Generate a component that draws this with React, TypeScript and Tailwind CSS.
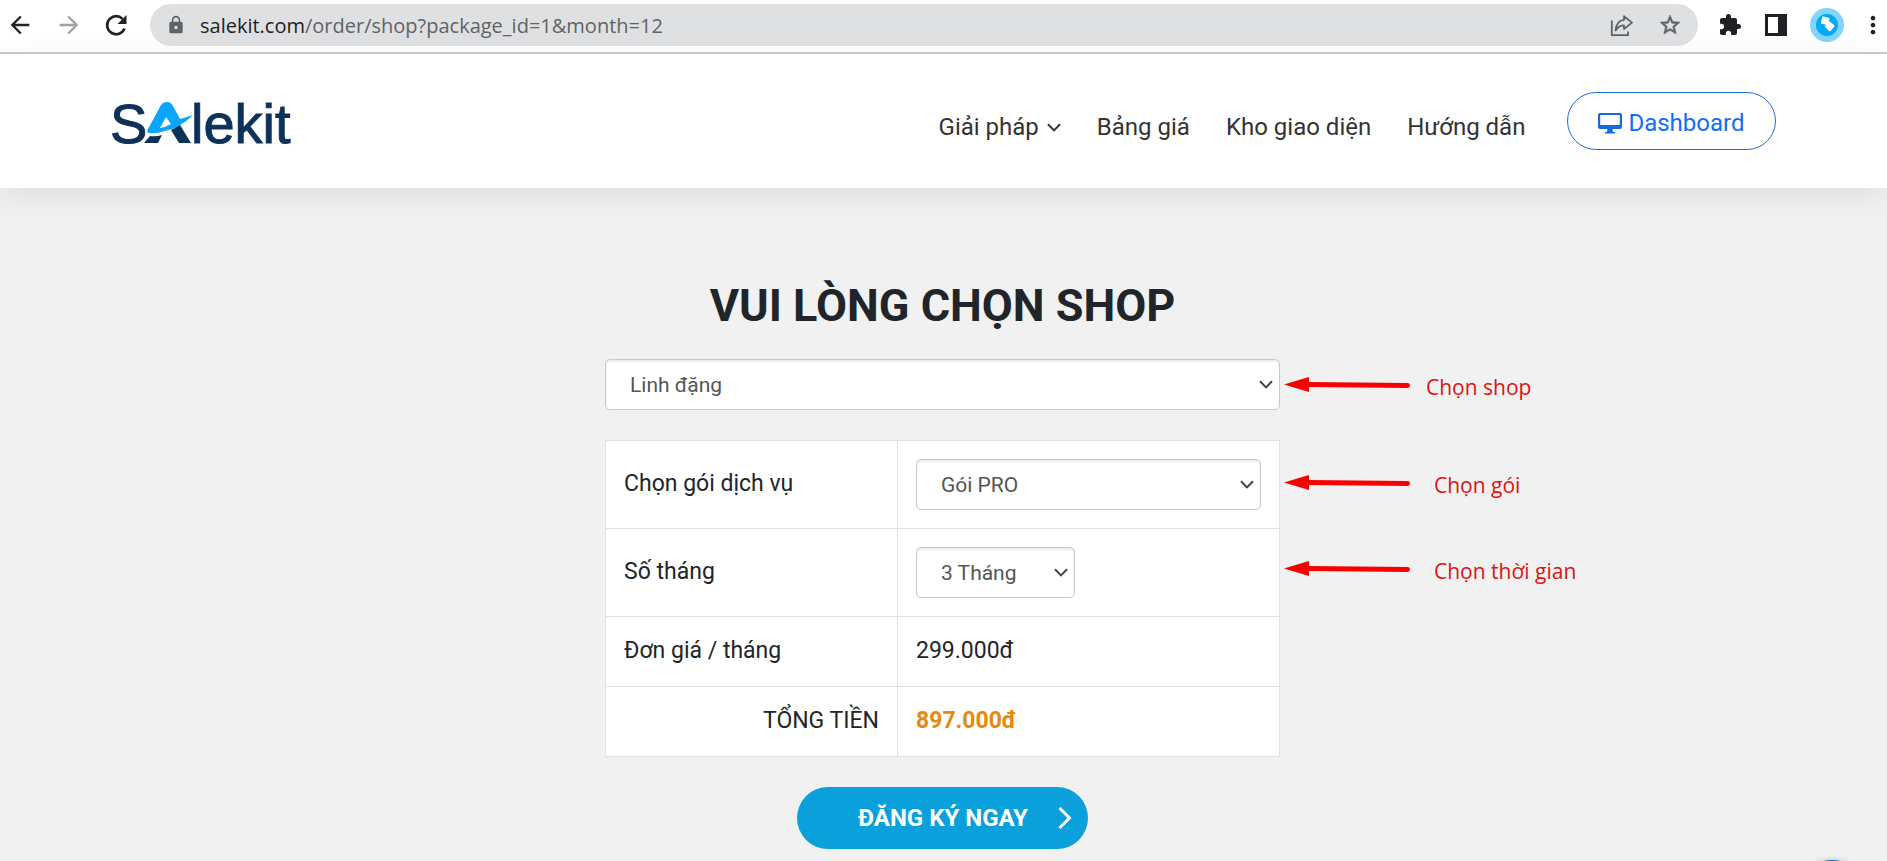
import React from 'react';
import { MdArrowBack, MdArrowForward, MdExtension, MdLock, MdMoreVert, MdStarOutline } from 'react-icons/md';

const navLinks = ['Bảng giá', 'Kho giao diện', 'Hướng dẫn'];

const Chevron: React.FC<{ className?: string }> = ({ className }) => (
  <svg viewBox="0 0 14 9" fill="none" stroke="currentColor" className={className} aria-hidden="true">
    <path d="M1 1.2 7 7.4 13 1.2" strokeWidth="2" />
  </svg>
);

const ShareIcon: React.FC = () => (
  <svg viewBox="0 0 24 24" fill="none" stroke="currentColor" strokeWidth="1.8" className="h-6 w-6">
    <path d="M1.800 7.500V22.200H18V18.500" />
    <path d="M14 3.200 22 9.600 14 16V12.300C10 12.300 8 13.600 5.600 17.400 6.200 11.400 8.800 7.400 14 6.900Z" strokeLinejoin="round" />
  </svg>
);

const ReloadIcon: React.FC = () => (
  <svg viewBox="0 0 24 24" fill="none" stroke="currentColor" className="h-6 w-6">
    <path d="M20.500 15.500A9 9 0 1 1 18.500 5.800" strokeWidth="2.600" />
    <path d="M22.500 2V11H13.500Z" fill="currentColor" stroke="none" />
  </svg>
);

const BrowserBar: React.FC = () => (
  <div className="flex h-[54px] items-start border-b-2 border-[#c9c9c9] bg-white pt-1">
    <div className="flex h-[42px] items-center gap-[21px] pl-1.5 pr-[22px]">
      <button aria-label="Back" className="text-[#202124]"><MdArrowBack className="h-7 w-7" /></button>
      <button aria-label="Forward" className="text-[#a0a1a3]"><MdArrowForward className="h-7 w-7" /></button>
      <button aria-label="Reload" className="text-[#202124]"><ReloadIcon /></button>
    </div>
    <div className="flex h-[42px] flex-1 items-center rounded-full bg-[#dfe0e2] pl-4 pr-4 text-[#5f6368]">
      <MdLock className="h-5 w-5" />
      <div className="ml-3.5 flex-1 pt-0.5 font-['Open_Sans',sans-serif] text-xl">
        <span className="text-[#202124]">salekit.com</span>/order/shop?package_id=1&amp;month=12
      </div>
      <button aria-label="Share" className="mr-6"><ShareIcon /></button>
      <button aria-label="Bookmark"><MdStarOutline className="h-6 w-6 stroke-current stroke-[0.6]" /></button>
    </div>
    <div className="flex h-[42px] items-center gap-[23px] pl-5 text-[#202124]">
      <button aria-label="Extensions"><MdExtension className="h-6 w-6" /></button>
      <button aria-label="Side panel">
        <svg viewBox="0 0 22 22" className="h-[22px] w-[22px]">
          <path fill="currentColor" fillRule="evenodd" d="M0 0H22V22H0ZM3 3V19H13V3Z" />
        </svg>
      </button>
      <button aria-label="Profile">
        <svg viewBox="0 0 34 34" className="h-[34px] w-[34px]">
          <circle cx="17" cy="17" r="17" fill="#81d4fa" />
          <circle cx="17" cy="17" r="11" fill="#03a9f4" />
          <g fill="#fff">
            <rect x="11.500" y="9" width="7.500" height="7.500" rx="1" transform="rotate(12 15.200 12.700)" />
            <rect x="16" y="14.500" width="7.500" height="7.500" rx="1" transform="rotate(42 19.700 18.200)" />
          </g>
        </svg>
      </button>
      <button aria-label="Menu" className="-ml-2"><MdMoreVert className="h-7 w-7" /></button>
    </div>
  </div>
);

const Logo: React.FC = () => (
  <a href="#" aria-label="Salekit" className="block">
    <svg viewBox="0 -11 186 68" className="h-[68px] w-[186px]">
      <g fill="#0d3158" stroke="#0d3158" strokeWidth="1" fontFamily="'Liberation Sans', sans-serif" fontSize="56">
        <text x="0" y="45">S</text>
        <text x="81" y="45">lekit</text>
      </g>
      <path
        fill="#0ba5fb"
        fillRule="evenodd"
        d="M38 31 51 7Q53 4 57 4 61 4 63 8L70 21Q77 19 83 17 70 30 55 33 45 36 39 35 36 34 38 31ZM50 30Q56 29 61 26L56 19Z"
      />
      <path fill="#0d3158" d="M40 38Q46 39 52 37L48 45H34ZM61 32 70 27 81 45H69Z" />
    </svg>
  </a>
);

const Header: React.FC = () => (
  <header className="relative bg-white shadow-[0_8px_32px_rgba(0,0,0,0.08)]">
    <div className="mx-auto flex h-[134px] max-w-[1668px] items-center justify-between pr-0.5">
      <Logo />
      <nav className="flex items-center gap-9 text-2xl text-[#333]">
        <a href="#" className="flex items-center gap-2 pt-3">
          Giải pháp <Chevron className="h-[9px] w-[14px]" />
        </a>
        {navLinks.map((label) => (
          <a key={label} href="#" className="pt-3">{label}</a>
        ))}
        <a href="#" className="ml-1.5 flex h-[58px] items-center gap-1.5 rounded-full border border-[#1a6fe0] px-[30px] pt-1 text-[#0d6efd]">
          <svg viewBox="0 0 24 22" className="h-[22px] w-6" fill="#1769dc">
            <path fillRule="evenodd" d="M2 1H22Q24 1 24 3V15Q24 17 22 17H14.500L15 20H17V21.500H7V20H9L9.500 17H2Q0 17 0 15V3Q0 1 2 1ZM2.200 3V13H21.800V3Z" />
          </svg>
          Dashboard
        </a>
      </nav>
    </div>
  </header>
);

interface SelectBoxProps {
  id: string;
  label?: string;
  options: string[];
  className: string;
}

const SelectBox: React.FC<SelectBoxProps> = ({ id, label, options, className }) => (
  <div className={`relative ${className}`}>
    <select
      id={id}
      aria-label={label}
      className="block h-[51px] w-full appearance-none rounded-[5px] border border-[#c8c8c8] bg-white px-6 pt-0.5 text-[21px] text-[#555] shadow-[inset_0_2px_2px_rgba(0,0,0,0.075)] outline-none"
    >
      {options.map((option) => (
        <option key={option}>{option}</option>
      ))}
    </select>
    <Chevron className="pointer-events-none absolute right-[7px] top-[21px] h-[9px] w-[14px] text-[#444]" />
  </div>
);

const Note: React.FC<{ text: string; className: string }> = ({ text, className }) => (
  <div className={`flex items-center pl-1 ${className}`}>
    <svg viewBox="0 0 126 16" className="h-4 w-[126px] shrink-0" fill="#f80000">
      <path d="M0 7.500 25 0V15Z" />
      <path d="M24 7.500 123.500 8.500" stroke="#f80000" strokeWidth="5" strokeLinecap="round" />
    </svg>
    <span className="pt-1.5 font-['Open_Sans',sans-serif] text-[21px] text-[#dc1414]">{text}</span>
  </div>
);

const cell = 'border border-[#dee2e6] px-[18px]';

const App: React.FC = () => (
  <div className="flex min-h-screen flex-col bg-[#f1f1f1] font-[Roboto,sans-serif] text-[#212529]">
    <BrowserBar />
    <Header />
    <main className="pr-0.5 pt-[85px]">
      <h1 className="text-center text-[45px] font-bold leading-[66px]">VUI LÒNG CHỌN SHOP</h1>
      <form className="mt-5 grid grid-cols-[1fr_675px_1fr] gap-y-[30px]" onSubmit={(e) => e.preventDefault()}>
        <SelectBox id="shop" label="Chọn shop" options={['Linh đặng']} className="col-start-2 w-full" />
        <Note text="Chọn shop" className="gap-4" />

        <table className="col-start-2 w-full table-fixed border-collapse bg-white text-[23px]">
          <tbody>
            <tr className="h-[88px]">
              <td className={`${cell} w-[292px]`}><label htmlFor="package">Chọn gói dịch vụ</label></td>
              <td className={cell}><SelectBox id="package" options={['Gói PRO']} className="w-full" /></td>
            </tr>
            <tr className="h-[88px]">
              <td className={cell}><label htmlFor="month">Số tháng</label></td>
              <td className={cell}><SelectBox id="month" options={['3 Tháng']} className="w-[159px]" /></td>
            </tr>
            <tr className="h-[70px]">
              <td className={cell}>Đơn giá / tháng</td>
              <td className={cell}>299.000đ</td>
            </tr>
            <tr className="h-[70px]">
              <td className={`${cell} text-right`}>TỔNG TIỀN</td>
              <td className={`${cell} font-bold text-[#e8890c]`}>897.000đ</td>
            </tr>
          </tbody>
        </table>
        <div className="grid auto-rows-[86px] content-start">
          <Note text="Chọn gói" className="gap-6" />
          <Note text="Chọn thời gian" className="gap-6" />
        </div>

        <button className="col-start-2 flex h-[62px] items-center justify-self-center rounded-full bg-[#0aa0dc] pl-[61px] pr-4 text-2xl font-bold text-white">
          ĐĂNG KÝ NGAY
          <svg viewBox="0 0 14 22" className="ml-[30px] h-[22px] w-[14px]" fill="none" stroke="currentColor" strokeWidth="3">
            <path d="M1.500 1 11.500 11 1.500 21" />
          </svg>
        </button>
      </form>
    </main>
    <button
      aria-label="Chat"
      className="fixed -bottom-[63px] right-[23px] h-16 w-16 rounded-full bg-[#0a6ed1] shadow-[0_1px_6px_rgba(0,0,0,0.3)]"
    />
  </div>
);

export default App;
